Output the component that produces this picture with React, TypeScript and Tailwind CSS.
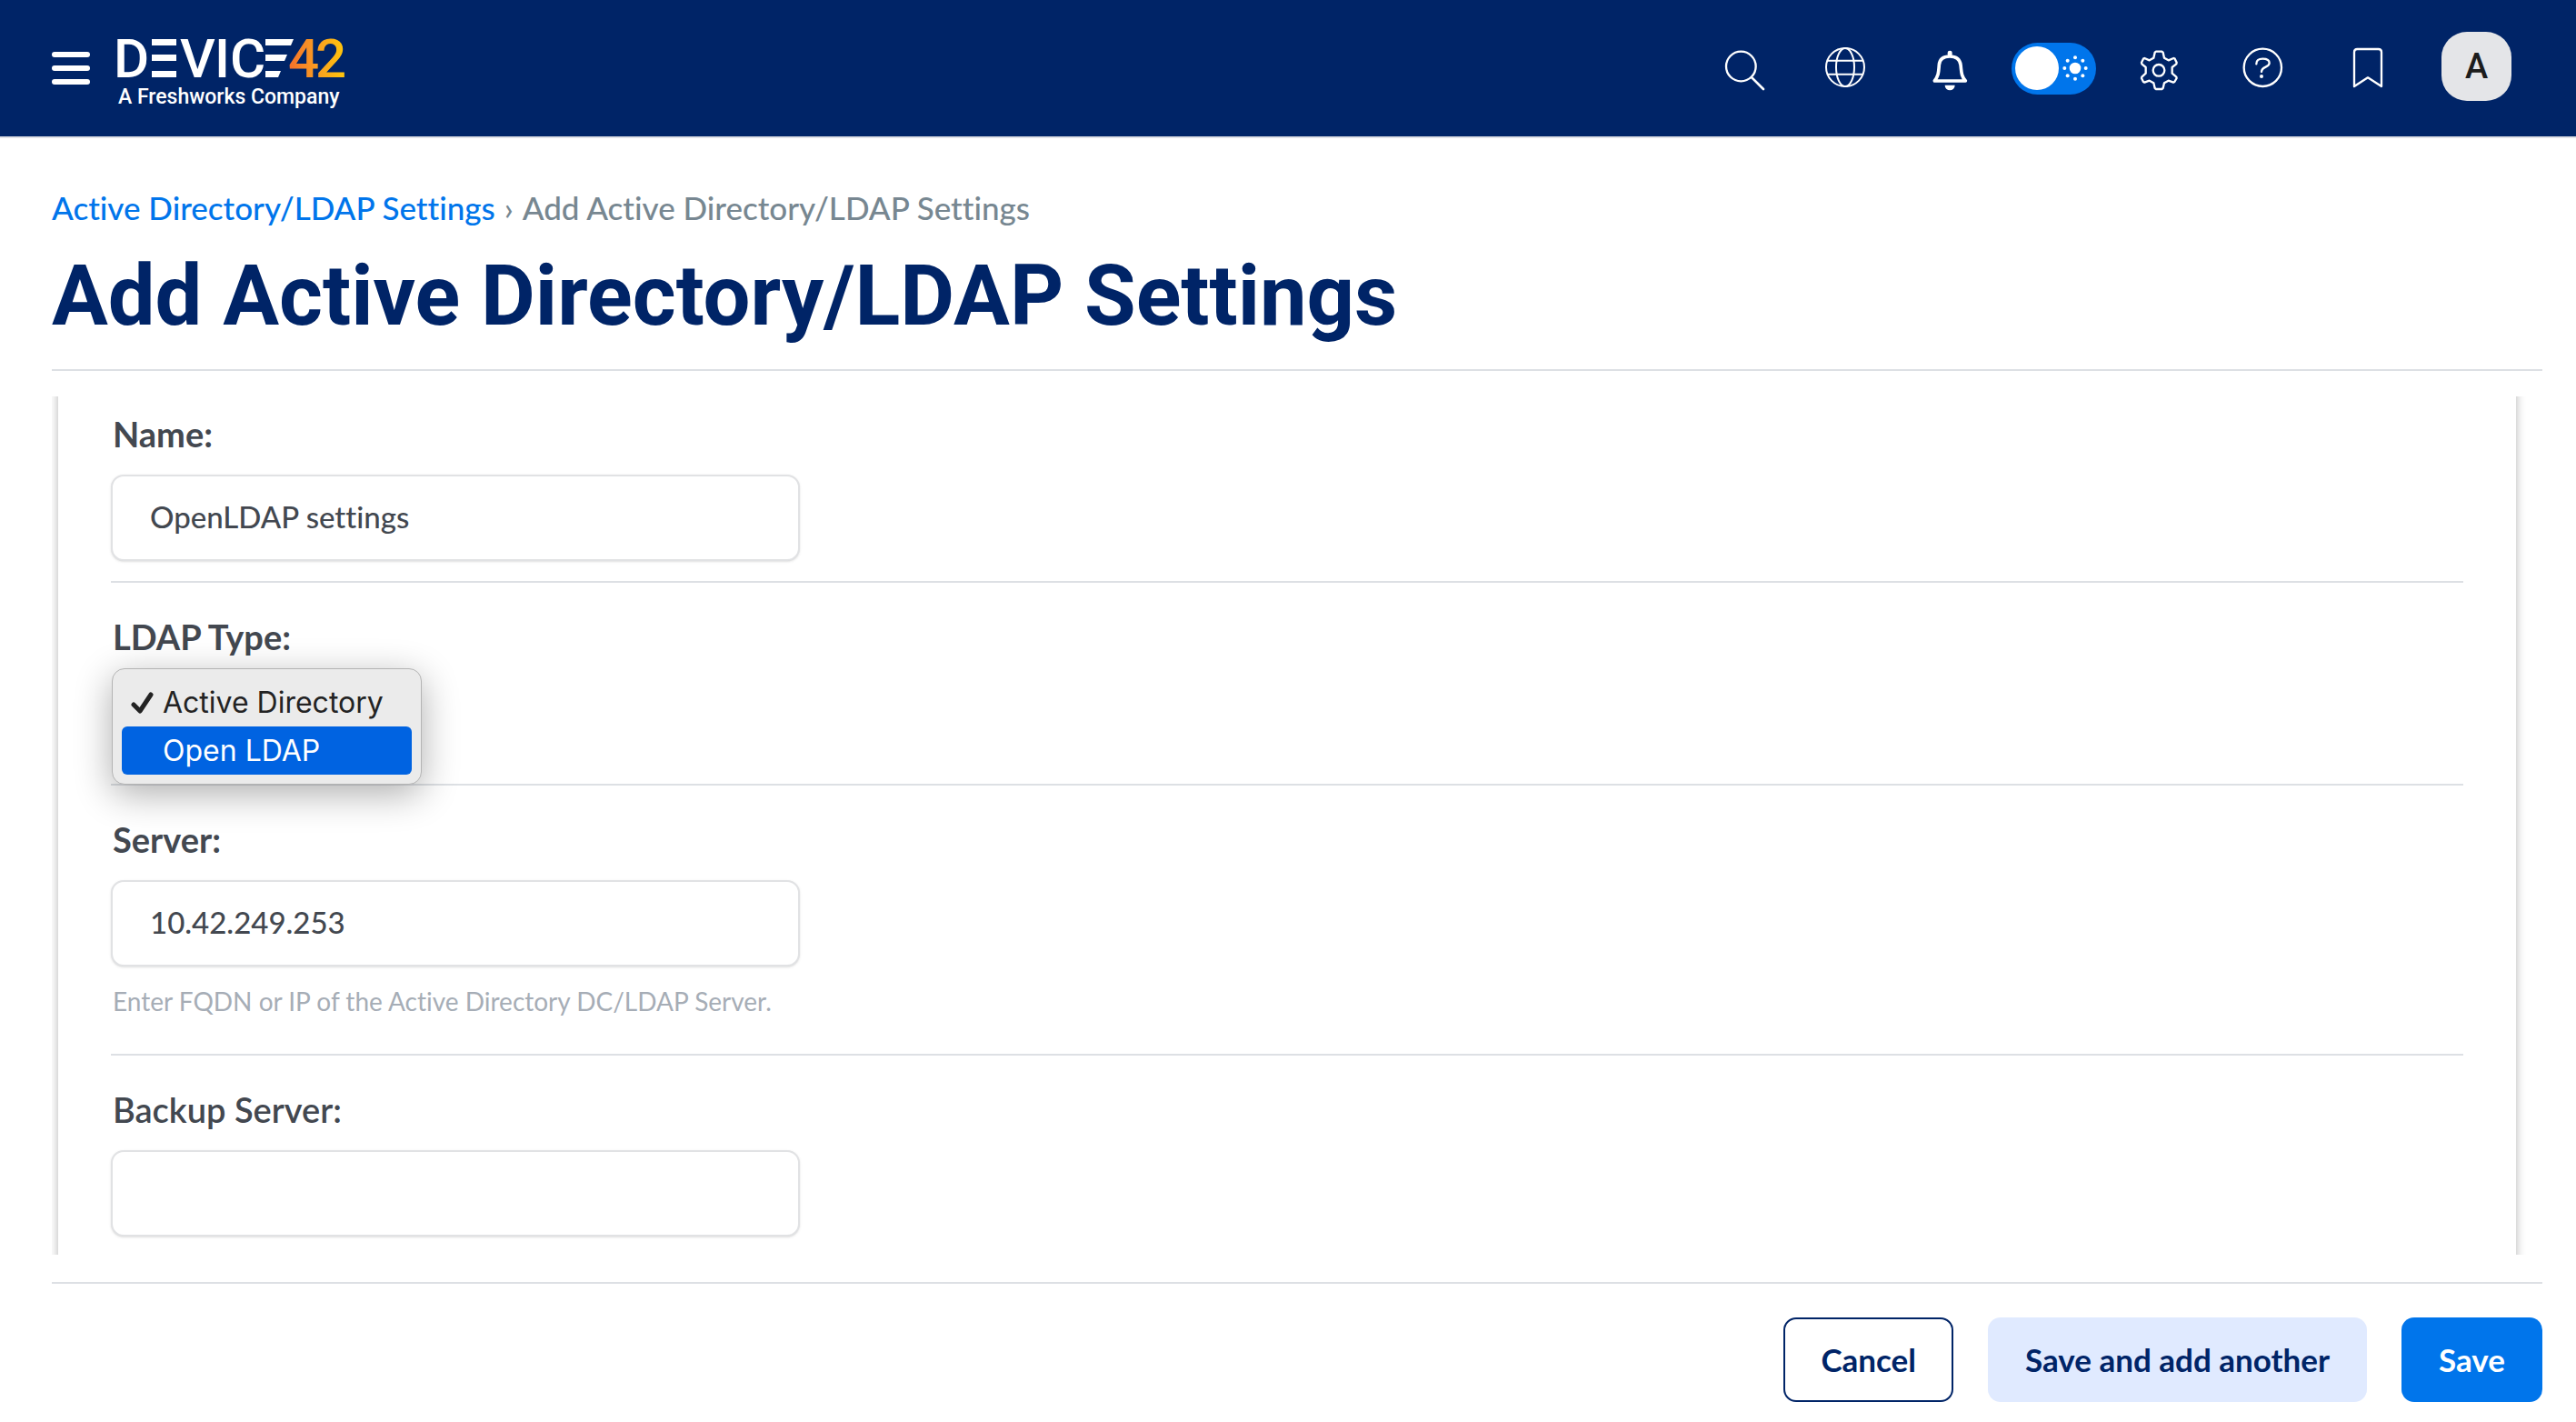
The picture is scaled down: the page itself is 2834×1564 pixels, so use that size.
import { useState } from "react";
import type { ReactNode } from "react";

function Logo() {
  return (
    <svg viewBox="121 30 264 92" className="h-[92px] w-[264px]" role="img" aria-label="Device42, A Freshworks Company">
      <defs>
        <linearGradient id="warm" gradientUnits="userSpaceOnUse" x1="318" y1="0" x2="379" y2="0">
          <stop offset="0" stopColor="#f3702b" />
          <stop offset="0.5" stopColor="#f99d22" />
          <stop offset="1" stopColor="#ffc60b" />
        </linearGradient>
      </defs>
      <g fill="#fff" fontFamily="Roboto, sans-serif" fontSize="60" fontWeight="500">
        <text x="125" y="86">D</text>
        <text x="198" y="86">V</text>
        <text x="236" y="86">I</text>
        <text x="253" y="86">C</text>
        <g fill="url(#warm)">
          <text x="317" y="86">4</text>
          <text x="347" y="86">2</text>
        </g>
      </g>
      <g fill="#fff">
        <rect x="167" y="44" width="27" height="7" />
        <rect x="167" y="61" width="27" height="7" />
        <rect x="167" y="79" width="27" height="7" />
        <path d="M292 44h31l-3 7h-28z" />
        <path d="M292 61h24l-3 7h-21z" />
        <path d="M292 79h17l-3 7h-14z" />
      </g>
      <text x="130" y="115" fill="#fff" fontFamily="Roboto, sans-serif" fontSize="23" fontWeight="500">
        A Freshworks Company
      </text>
    </svg>
  );
}

function IconButton({ label, children }: { label: string; children: ReactNode }) {
  return (
    <button type="button" aria-label={label} className="flex w-[115px] justify-center">
      {children}
    </button>
  );
}

function ThemeSwitch() {
  const dots = [
    [1270, 191], [1295, 201], [1305, 226], [1295, 251],
    [1270, 261], [1245, 251], [1235, 226], [1245, 201],
  ];
  return (
    <div className="flex w-[115px] justify-center">
      <button
        type="button"
        role="switch"
        aria-checked="false"
        aria-label="Dark theme"
        className="flex h-[57px] w-[93px] items-center gap-1 rounded-full bg-[#0075eb] pl-1"
      >
        <span className="size-12 rounded-full bg-white" />
        <svg viewBox="1228 184 84 84" className="size-7" fill="#fff">
          <circle cx="1270" cy="226" r="19" />
          {dots.map(([x, y]) => (
            <circle key={x + "-" + y} cx={x} cy={y} r="6" />
          ))}
        </svg>
      </button>
    </div>
  );
}

function Header() {
  return (
    <header className="flex h-[152px] shrink-0 items-center justify-between border-b-2 border-[#e0e1e6] bg-[#002467] pr-[71px] pl-[57px]">
      <div className="flex items-center gap-[22px]">
        <button type="button" aria-label="Menu" className="flex w-[42px] flex-col gap-[9px]">
          <span className="h-[6px] rounded-full bg-white" />
          <span className="h-[6px] rounded-full bg-white" />
          <span className="h-[6px] rounded-full bg-white" />
        </button>
        <Logo />
      </div>
      <div className="flex items-center">
        <button type="button" aria-label="Search" className="flex w-[106px] justify-center">
          <svg viewBox="111 151 135 150" className="h-[50px] w-[45px]" fill="none" stroke="#fff" strokeWidth="7" strokeLinecap="round">
            <circle cx="166" cy="220" r="49" />
            <path d="M202 257L240 295" strokeWidth="8" />
          </svg>
        </button>
        <IconButton label="Language">
          <svg viewBox="441 151 138 150" className="h-[50px] w-[46px]" fill="none" stroke="#fff" strokeWidth="6">
            <circle cx="510" cy="223" r="63" />
            <ellipse cx="510" cy="223" rx="30" ry="63" />
            <path d="M452 201H568M452 246H568" />
          </svg>
        </IconButton>
        <IconButton label="Notifications">
          <svg viewBox="796 151 120 150" className="h-[50px] w-[40px]" fill="#fff">
            <path
              d="M806 268H908C893 250 895 238 892 215C889 192 872 187 856 187C840 187 823 192 821 215C819 238 820 250 806 268Z"
              fill="none"
              stroke="#fff"
              strokeWidth="11"
              strokeLinejoin="round"
            />
            <rect x="849" y="168" width="15" height="20" rx="7" />
            <path d="M840 282H873A16.5 17 0 0 1 840 282Z" />
          </svg>
        </IconButton>
        <ThemeSwitch />
        <IconButton label="Settings">
          <svg viewBox="75 151 126 150" className="h-[50px] w-[42px]" fill="none" stroke="#fff" strokeWidth="7" strokeLinejoin="round">
            <path d="M129 171H148L152 174L156 192L170 200L187 193L191 195L197 207L196 212L182 223V243L196 255L197 259L190 271L186 273L170 267L156 275L152 292L148 295H129L125 292L121 275L107 267L91 273L87 271L81 259L82 255L95 243V223L82 212L81 207L87 195L91 193L107 200L121 192L125 174Z" />
            <circle cx="138" cy="233" r="19" />
          </svg>
        </IconButton>
        <IconButton label="Help">
          <svg viewBox="415 151 135 150" className="h-[50px] w-[45px]" fill="none" stroke="#fff" strokeWidth="7" strokeLinecap="round">
            <circle cx="482" cy="224" r="62" />
            <path d="M461 212C461 198 469 195 482 195C497 195 504 199 504 209C504 224 478 220 478 238" />
            <circle cx="478" cy="253" r="6" fill="#fff" stroke="none" />
          </svg>
        </IconButton>
        <IconButton label="Bookmarks">
          <svg viewBox="777 151 102 150" className="h-[50px] w-[34px]" fill="none" stroke="#fff" strokeWidth="7" strokeLinejoin="round">
            <path d="M783 286V173Q783 163 793 163H863Q873 163 873 173V286L828 257Z" />
          </svg>
        </IconButton>
        <button
          type="button"
          aria-label="Account"
          className="mb-1 ml-6 flex h-[76px] w-[77px] items-center justify-center rounded-[28px] bg-[#e4e5e8] font-[Roboto,sans-serif] text-[38px] font-medium text-[#1c1c1c]"
        >
          A
        </button>
      </div>
    </header>
  );
}

type RowProps = { id: string; label: string; strong?: boolean; children: ReactNode };

function Row({ id, label, strong, children }: RowProps) {
  return (
    <div className="flex flex-col items-start border-b-2 border-[#dde0e4] pt-9 pb-[22px]">
      <label
        htmlFor={id}
        className={
          "mb-[22px] pl-[2px] text-[38px] leading-[46px] text-[#434850] " + (strong ? "font-bold" : "font-semibold")
        }
      >
        {label}
      </label>
      {children}
    </div>
  );
}

function TextBox({ id, value }: { id: string; value: string }) {
  const [text, setText] = useState(value);
  return (
    <input
      id={id}
      type="text"
      value={text}
      onChange={(e) => setText(e.target.value)}
      className="h-[95px] w-full max-w-[758px] rounded-[14px] border-2 border-[#e1e2e4] bg-white px-[41px] pb-1 text-[33px] font-medium text-[#434850] shadow-sm outline-none"
    />
  );
}

function TypePicker({ id }: { id: string }) {
  return (
    <div className="relative h-[95px] w-[341px]">
      <select id={id} defaultValue="ad" className="h-full w-full appearance-none rounded-[14px] text-transparent">
        <option value="ad">Active Directory</option>
        <option value="open">Open LDAP</option>
      </select>
      <ul
        role="listbox"
        aria-label="LDAP Type"
        className="absolute -top-[10px] left-px w-full rounded-[14px] border border-[#b4b4b4] bg-[#ebebeb] p-[10px] font-[Inter,sans-serif] text-[32px] leading-[53px] shadow-[0_10px_40px_rgba(0,0,0,0.32)]"
      >
        <li role="option" aria-selected="true" className="flex items-center rounded-md pl-[10px] text-[#232323]">
          <svg viewBox="0 0 26 26" className="mr-[9px] size-[26px]" fill="none" stroke="#232323" strokeWidth="5" strokeLinecap="round" strokeLinejoin="round">
            <path d="M3 15L10 22L22 4" />
          </svg>
          Active Directory
        </li>
        <li role="option" aria-selected="false" className="rounded-md bg-[#0063e1] pl-[45px] text-white">
          Open LDAP
        </li>
      </ul>
    </div>
  );
}

export default function App() {
  return (
    <div className="flex h-screen flex-col bg-white font-[Lato,sans-serif] [font-variant-ligatures:none]">
      <Header />
      <main className="flex min-h-0 flex-1 flex-col pr-[37px] pl-[57px]">
        <nav aria-label="Breadcrumb" className="mt-[52px] flex gap-[10px] text-[35px] leading-[48px] font-medium text-[#778791]">
          <a href="#settings" className="text-[#0075eb]">Active Directory/LDAP Settings</a>
          <span>›</span>
          <span>Add Active Directory/LDAP Settings</span>
        </nav>
        <h1 className="mt-5 border-b-2 border-[#dde0e4] pb-[26px] font-[Roboto,sans-serif] text-[92px] leading-[108px] font-bold text-[#002467]">
          Add Active Directory/LDAP Settings
        </h1>
        <form className="flex min-h-0 flex-1 flex-col">
          <div className="mt-7 min-h-0 flex-1 overflow-y-auto pr-[29px] pl-[7px] [scrollbar-width:none]">
            <div className="-mt-[18px] bg-white px-[58px] pb-10 shadow-[0_0_10px_rgba(0,0,0,0.3)]">
              <Row id="name" label="Name:" strong>
                <TextBox id="name" value="OpenLDAP settings" />
              </Row>
              <Row id="type" label="LDAP Type:" strong>
                <TypePicker id="type" />
              </Row>
              <Row id="server" label="Server:" strong>
                <TextBox id="server" value="10.42.249.253" />
                <p className="mt-[21px] mb-[19px] pl-[2px] text-[28px] leading-[34px] text-[#a6adb6]">
                  Enter FQDN or IP of the Active Directory DC/LDAP Server.
                </p>
              </Row>
              <Row id="backup" label="Backup Server:">
                <TextBox id="backup" value="" />
              </Row>
            </div>
          </div>
          <div className="mt-[30px] flex justify-end gap-[38px] border-t-2 border-[#dde0e4] pt-[37px] pb-[22px] text-[35px] font-bold">
            <button type="button" className="h-[93px] rounded-[14px] border-2 border-[#002467] px-[39px] text-[#002467]">
              Cancel
            </button>
            <button type="submit" className="h-[93px] rounded-[14px] bg-[#e0eaff] px-[41px] text-[#002467]">
              Save and add another
            </button>
            <button type="submit" className="h-[93px] rounded-[14px] bg-[#0075eb] px-[41px] text-white">
              Save
            </button>
          </div>
        </form>
      </main>
    </div>
  );
}
